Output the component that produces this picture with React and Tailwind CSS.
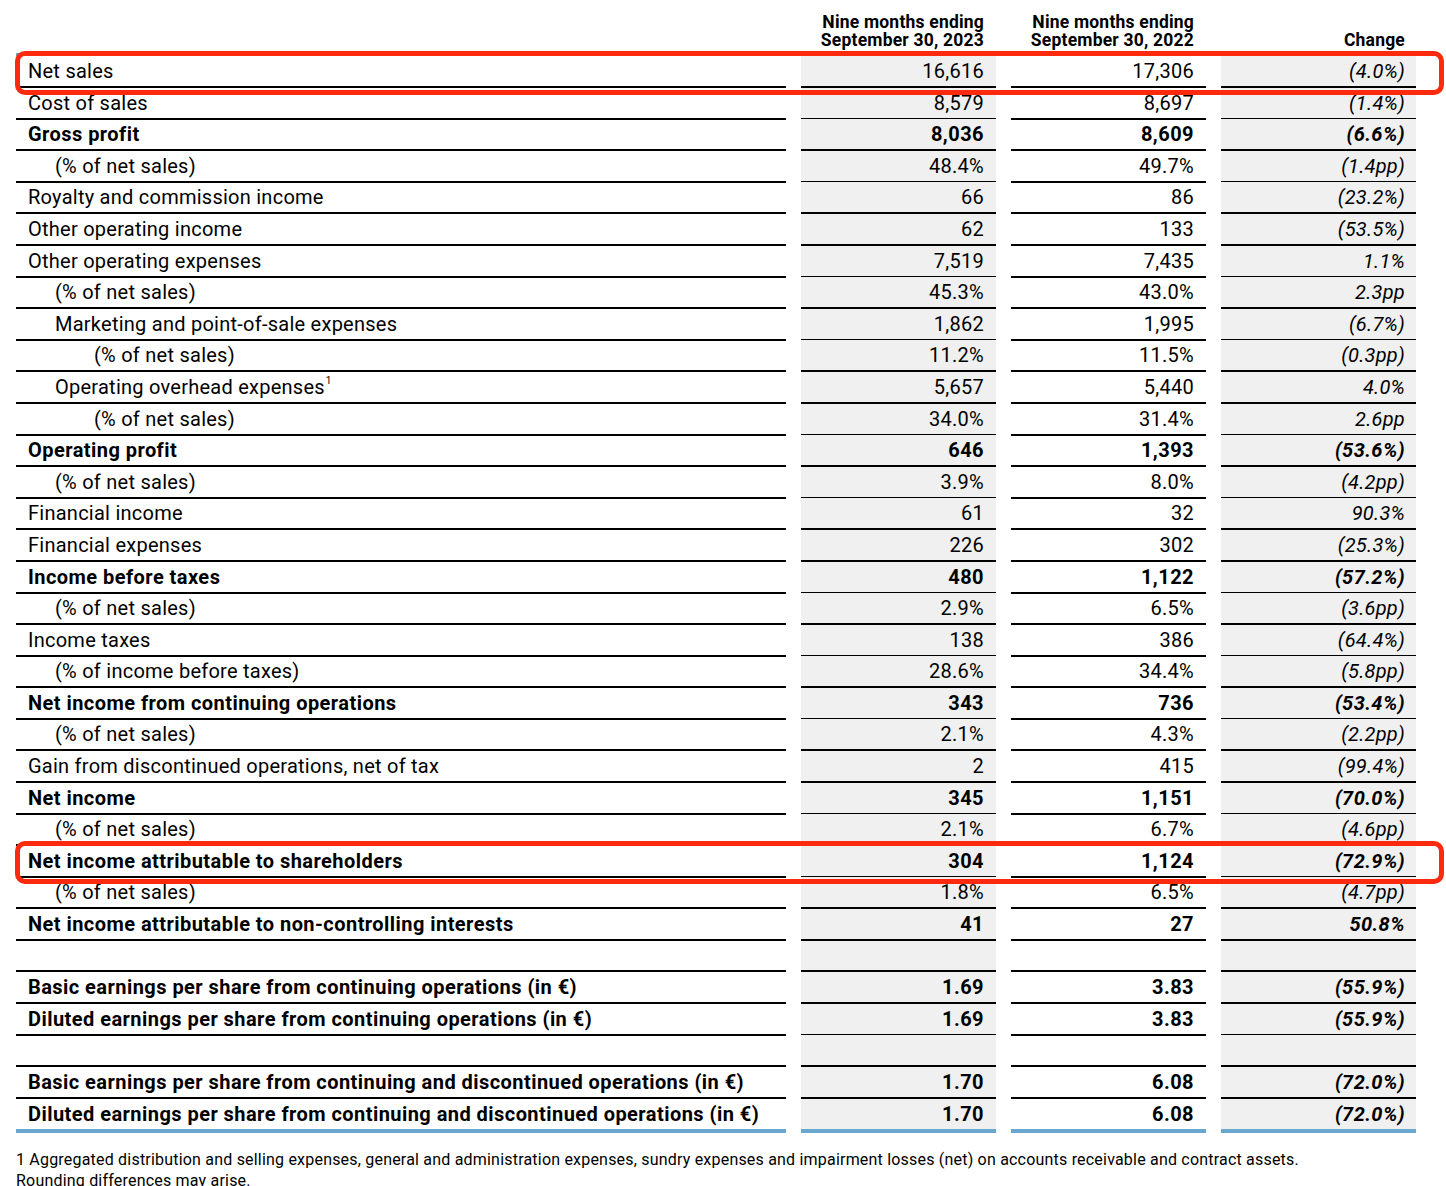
const rows = [
  { label: "Net sales", a: "16,616", b: "17,306", c: "(4.0%)", box: true },
  { label: "Cost of sales", a: "8,579", b: "8,697", c: "(1.4%)" },
  { label: "Gross profit", a: "8,036", b: "8,609", c: "(6.6%)", bold: true },
  { label: "(% of net sales)", a: "48.4%", b: "49.7%", c: "(1.4pp)", indent: 1 },
  { label: "Royalty and commission income", a: "66", b: "86", c: "(23.2%)" },
  { label: "Other operating income", a: "62", b: "133", c: "(53.5%)" },
  { label: "Other operating expenses", a: "7,519", b: "7,435", c: "1.1%" },
  { label: "(% of net sales)", a: "45.3%", b: "43.0%", c: "2.3pp", indent: 1 },
  { label: "Marketing and point-of-sale expenses", a: "1,862", b: "1,995", c: "(6.7%)", indent: 1 },
  { label: "(% of net sales)", a: "11.2%", b: "11.5%", c: "(0.3pp)", indent: 2 },
  { label: "Operating overhead expenses", sup: "1", a: "5,657", b: "5,440", c: "4.0%", indent: 1 },
  { label: "(% of net sales)", a: "34.0%", b: "31.4%", c: "2.6pp", indent: 2 },
  { label: "Operating profit", a: "646", b: "1,393", c: "(53.6%)", bold: true },
  { label: "(% of net sales)", a: "3.9%", b: "8.0%", c: "(4.2pp)", indent: 1 },
  { label: "Financial income", a: "61", b: "32", c: "90.3%" },
  { label: "Financial expenses", a: "226", b: "302", c: "(25.3%)" },
  { label: "Income before taxes", a: "480", b: "1,122", c: "(57.2%)", bold: true },
  { label: "(% of net sales)", a: "2.9%", b: "6.5%", c: "(3.6pp)", indent: 1 },
  { label: "Income taxes", a: "138", b: "386", c: "(64.4%)" },
  { label: "(% of income before taxes)", a: "28.6%", b: "34.4%", c: "(5.8pp)", indent: 1 },
  { label: "Net income from continuing operations", a: "343", b: "736", c: "(53.4%)", bold: true },
  { label: "(% of net sales)", a: "2.1%", b: "4.3%", c: "(2.2pp)", indent: 1 },
  { label: "Gain from discontinued operations, net of tax", a: "2", b: "415", c: "(99.4%)" },
  { label: "Net income", a: "345", b: "1,151", c: "(70.0%)", bold: true },
  { label: "(% of net sales)", a: "2.1%", b: "6.7%", c: "(4.6pp)", indent: 1 },
  { label: "Net income attributable to shareholders", a: "304", b: "1,124", c: "(72.9%)", bold: true, box: true },
  { label: "(% of net sales)", a: "1.8%", b: "6.5%", c: "(4.7pp)", indent: 1 },
  { label: "Net income attributable to non-controlling interests", a: "41", b: "27", c: "50.8%", bold: true },
  { label: "", a: "", b: "", c: "" },
  { label: "Basic earnings per share from continuing operations (in €)", a: "1.69", b: "3.83", c: "(55.9%)", bold: true },
  { label: "Diluted earnings per share from continuing operations (in €)", a: "1.69", b: "3.83", c: "(55.9%)", bold: true },
  { label: "", a: "", b: "", c: "" },
  { label: "Basic earnings per share from continuing and discontinued operations (in €)", a: "1.70", b: "6.08", c: "(72.0%)", bold: true },
  { label: "Diluted earnings per share from continuing and discontinued operations (in €)", a: "1.70", b: "6.08", c: "(72.0%)", bold: true, last: true },
];

const indentClass = ["pl-[12px]", "pl-[39px]", "pl-[78px]"];

const Row = ({ row }) => {
  const line = row.last ? "border-b-[4px] border-[#6aa7cf]" : "border-b-2 border-black";
  const weight = row.bold ? "font-bold tracking-[0.45px]" : "font-normal tracking-[0.25px]";
  return (
    <div className="relative grid grid-cols-[770px_195px_195px_195px] gap-x-[15px] h-[31.6px]">
      <div className={`flex items-center whitespace-nowrap ${line} ${indentClass[row.indent || 0]} ${weight}`}>
        <span>{row.label}</span>
        {row.sup && <sup className="text-[10px] ml-[1px] -top-[6px]">{row.sup}</sup>}
      </div>
      <div className={`flex items-center justify-end pr-[12px] bg-[#f0f0f0] ${line} ${weight}`}>{row.a}</div>
      <div className={`flex items-center justify-end pr-[12px] ${line} ${weight}`}>{row.b}</div>
      <div className={`flex items-center justify-end pr-[11px] bg-[#f0f0f0] italic ${line} ${weight}`}>{row.c}</div>
      {row.box && (
        <div className="absolute -left-[1px] -right-[14px] -top-[5px] -bottom-[7px] rounded-[10px] border-[5px] border-[#fe2a0e] pointer-events-none z-10" />
      )}
    </div>
  );
};

export default function App() {
  return (
    <div className="w-[1446px] h-[1186px] overflow-hidden bg-white text-black font-['Roboto',sans-serif] text-[20px]">
      <div className="px-[16px]">
        <div className="grid grid-cols-[770px_195px_195px_195px] gap-x-[15px] h-[56px] font-bold text-[17.5px] leading-[18px] tracking-[0.2px]">
          <div />
          <div className="flex flex-col items-end justify-end pr-[12px] pb-[7px]">
            <span>Nine months ending</span>
            <span>September 30, 2023</span>
          </div>
          <div className="flex flex-col items-end justify-end pr-[12px] pb-[7px]">
            <span>Nine months ending</span>
            <span>September 30, 2022</span>
          </div>
          <div className="flex flex-col items-end justify-end pr-[11px] pb-[7px]">
            <span>Change</span>
          </div>
        </div>
        <div className="border-t-[3px] border-[#6aa7cf] -mt-[3px]">
          {rows.map((row, i) => (
            <Row key={i} row={row} />
          ))}
        </div>
        <div className="mt-[19px] text-[16px] leading-[21px] tracking-[0.2px]">
          <p>1 Aggregated distribution and selling expenses, general and administration expenses, sundry expenses and impairment losses (net) on accounts receivable and contract assets.</p>
          <p>Rounding differences may arise.</p>
        </div>
      </div>
    </div>
  );
}
